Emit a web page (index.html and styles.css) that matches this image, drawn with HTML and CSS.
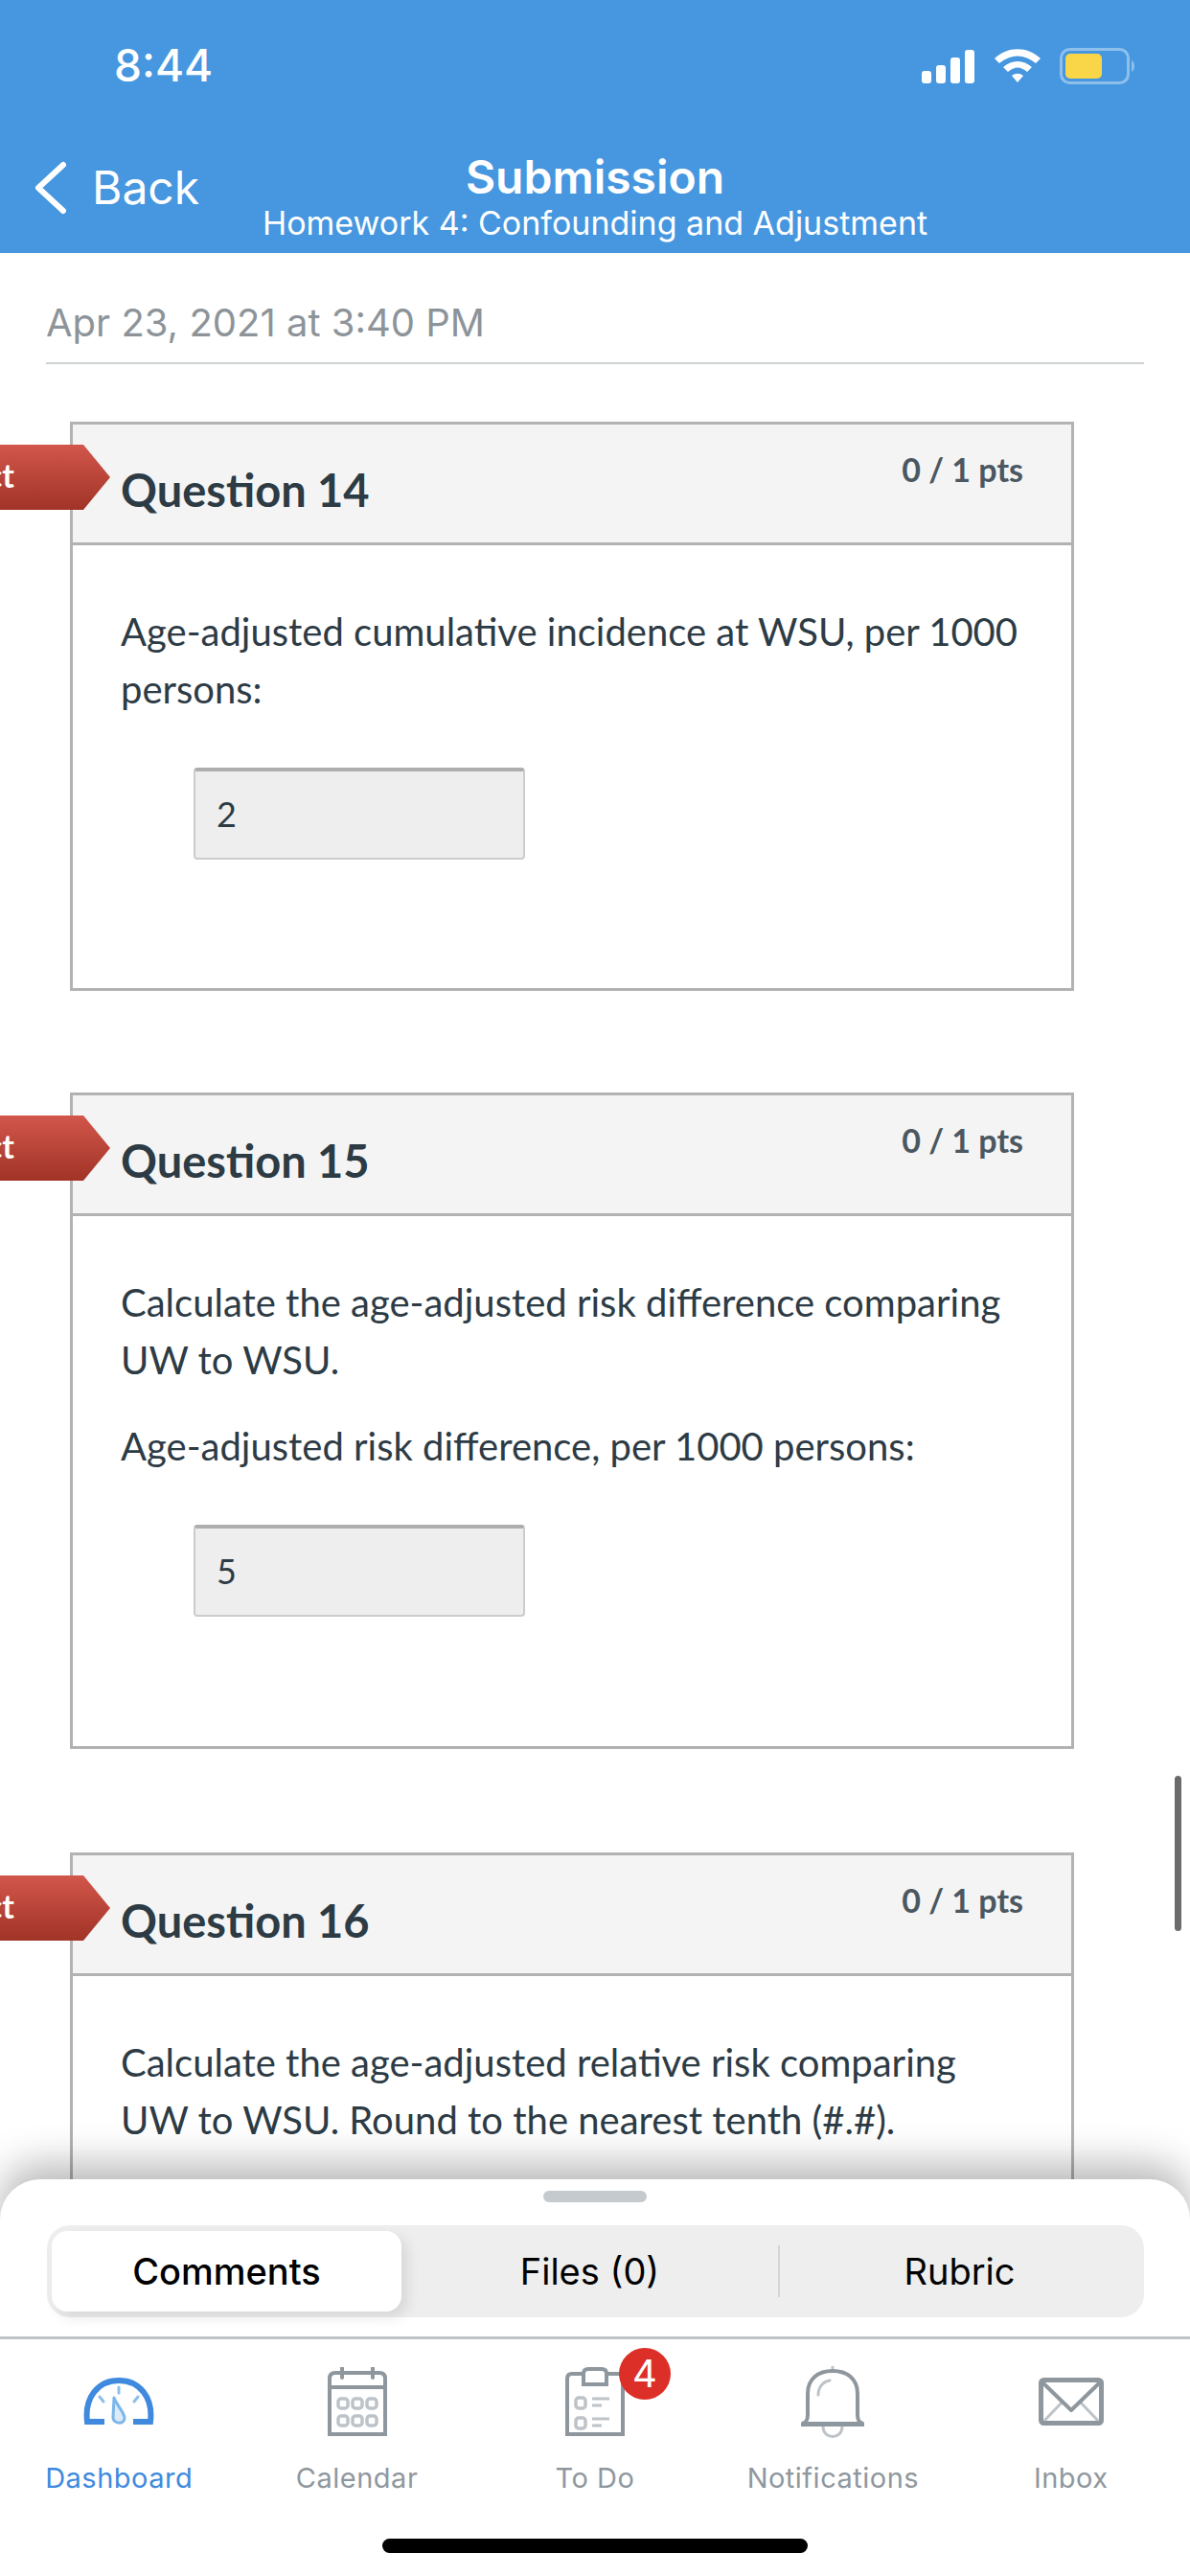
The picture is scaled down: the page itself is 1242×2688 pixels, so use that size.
FILE: index.html
```html
<!DOCTYPE html>
<html lang="en">
<head>
    <meta charset="UTF-8">
    <meta name="viewport" content="width=device-width, initial-scale=1.0">
    <title>Submission</title>
    <link rel="stylesheet" href="styles.css">
</head>
<body>
    <div class="screen">
        <header class="app-header">
            <div class="status-bar">
                <span class="clock">8:44</span>
                <div class="status-icons">
                    <svg class="icon-signal" width="56" height="35" viewBox="0 0 56 35">
                        <rect x="0" y="22" width="10" height="13" rx="3"/>
                        <rect x="15" y="16" width="10" height="19" rx="3"/>
                        <rect x="30" y="8" width="10" height="27" rx="3"/>
                        <rect x="45" y="0" width="10" height="35" rx="3"/>
                    </svg>
                    <svg class="icon-wifi" width="48" height="36" viewBox="0 0 48 36">
                        <path d="M0 10 C14 -3 34 -3 48 10 L43 15 C31 5 17 5 5 15 Z"/>
                        <path d="M9 19 C18 11 30 11 39 19 L34 24 C27 18 21 18 14 24 Z"/>
                        <path d="M18 28 C22 25 26 25 30 28 L24 35 Z"/>
                    </svg>
                    <svg class="icon-battery" width="80" height="38" viewBox="0 0 80 38">
                        <rect x="1.5" y="1.5" width="70" height="35" rx="9" fill="none" stroke="#8fc0ec" stroke-width="3"/>
                        <rect x="6" y="6" width="38" height="26" rx="5" fill="#f9d648"/>
                        <path d="M75 13 C79 15 79 23 75 25 Z" fill="#8fc0ec"/>
                    </svg>
                </div>
            </div>
            <div class="nav-bar">
                <div class="nav-back">
                    <svg width="36" height="56" viewBox="0 0 36 56">
                        <path d="M32 4 L6 28 L32 52" fill="none" stroke="#fff" stroke-width="6" stroke-linecap="round" stroke-linejoin="round" transform="translate(-2 0)"/>
                    </svg>
                    <span>Back</span>
                </div>
                <div class="nav-title">
                    <div class="nav-title-main">Submission</div>
                    <div class="nav-title-sub">Homework 4: Confounding and Adjustment</div>
                </div>
            </div>
        </header>

        <main class="content">
            <div class="submitted-at">Apr 23, 2021 at 3:40 PM</div>

            <section class="question q14">
                <div class="answer-flag"><span>Incorrect</span></div>
                <div class="question-head">
                    <h3>Question 14</h3>
                    <span class="points">0 / 1 pts</span>
                </div>
                <div class="question-body">
                    <p>Age-adjusted cumulative incidence at WSU, per 1000 persons:</p>
                    <div class="answer-box">2</div>
                </div>
            </section>

            <section class="question q15">
                <div class="answer-flag"><span>Incorrect</span></div>
                <div class="question-head">
                    <h3>Question 15</h3>
                    <span class="points">0 / 1 pts</span>
                </div>
                <div class="question-body">
                    <p>Calculate the age-adjusted risk difference comparing UW to WSU.</p>
                    <p>Age-adjusted risk difference, per 1000 persons:</p>
                    <div class="answer-box">5</div>
                </div>
            </section>

            <section class="question q16">
                <div class="answer-flag"><span>Incorrect</span></div>
                <div class="question-head">
                    <h3>Question 16</h3>
                    <span class="points">0 / 1 pts</span>
                </div>
                <div class="question-body">
                    <p>Calculate the age-adjusted relative risk comparing UW to WSU. Round to the nearest tenth (#.#).</p>
                </div>
            </section>
        </main>

        <div class="scroll-thumb"></div>

        <div class="bottom-sheet">
            <div class="sheet-handle"></div>
            <div class="tabs">
                <div class="tab tab-active">Comments</div>
                <div class="tab tab-files">Files (0)</div>
                <div class="tab-divider"></div>
                <div class="tab tab-rubric">Rubric</div>
            </div>
            <nav class="tab-bar">
                <div class="tab-item tab-item-active">
                    <div class="tab-icon">
                        <svg width="74" height="52" viewBox="0 0 74 52" fill="none">
                            <path d="M22 47 H4 C1 22 15 4 37 4 C59 4 73 22 70 47 H52" stroke="#3f8ade" stroke-width="6"/>
                            <path d="M37 11 V17 M17 21 L21 26 M57 21 L53 26" stroke="#8cc0ec" stroke-width="3" stroke-linecap="round"/>
                            <path d="M32 26 C34 32 43 42 43 47 C43 55 30 53 31 46 Z" transform="translate(0 -4)" fill="#dcebf9" stroke="#7db6ea" stroke-width="3" stroke-linejoin="round"/>
                        </svg>
                    </div>
                    <span>Dashboard</span>
                </div>
                <div class="tab-item">
                    <div class="tab-icon">
                        <svg width="62" height="72" viewBox="0 0 62 72" fill="none">
                            <path d="M2 70 V12 Q2 6 8 6 H54 Q60 6 60 12 V70 Z" stroke="#8f979e" stroke-width="4"/>
                            <path d="M2 21 H60" stroke="#8f979e" stroke-width="4"/>
                            <path d="M15 1 V11 M47 1 V11" stroke="#8f979e" stroke-width="4" stroke-linecap="round"/>
                            <g stroke="#bdc3c8" stroke-width="3.5">
                                <rect x="11" y="33" width="10" height="10" rx="3"/>
                                <rect x="26" y="33" width="10" height="10" rx="3"/>
                                <rect x="41" y="33" width="10" height="10" rx="3"/>
                                <rect x="11" y="51" width="10" height="10" rx="3"/>
                                <rect x="26" y="51" width="10" height="10" rx="3"/>
                                <rect x="41" y="51" width="10" height="10" rx="3"/>
                            </g>
                        </svg>
                    </div>
                    <span>Calendar</span>
                </div>
                <div class="tab-item">
                    <div class="tab-icon">
                        <svg width="62" height="72" viewBox="0 0 62 72" fill="none">
                            <path d="M2 70 V12 Q2 7 7 7 H55 Q60 7 60 12 V70 Z" stroke="#8f979e" stroke-width="4"/>
                            <path d="M19 18 V7 Q19 2 24 2 H38 Q43 2 43 7 V18 Z" fill="#fff" stroke="#8f979e" stroke-width="4"/>
                            <rect x="11" y="32" width="10" height="11" rx="3" stroke="#bdc3c8" stroke-width="3.5"/>
                            <rect x="11" y="53" width="10" height="11" rx="3" stroke="#bdc3c8" stroke-width="3.5"/>
                            <path d="M28 33 H46 M28 40 H38 M28 54 H46 M28 61 H38" stroke="#bdc3c8" stroke-width="3"/>
                        </svg>
                        <span class="badge">4</span>
                    </div>
                    <span>To Do</span>
                </div>
                <div class="tab-item">
                    <div class="tab-icon">
                        <svg width="68" height="76" viewBox="0 0 68 76" fill="none">
                            <path d="M34 1 V6" stroke="#bdc3c8" stroke-width="3"/>
                            <path d="M8 52 V30 C8 14 19 6 34 6 C49 6 60 14 60 30 V52 C60 58 62 60 66 61 H2 C6 60 8 58 8 52 Z" stroke="#8f979e" stroke-width="4"/>
                            <path d="M1 62 H67" stroke="#8f979e" stroke-width="4"/>
                            <path d="M19 31 C19 23 24 17 31 16" stroke="#bdc3c8" stroke-width="3" stroke-linecap="round"/>
                            <path d="M24 64 C24 78 44 78 44 64" stroke="#bdc3c8" stroke-width="3"/>
                        </svg>
                    </div>
                    <span>Notifications</span>
                </div>
                <div class="tab-item">
                    <div class="tab-icon">
                        <svg width="68" height="50" viewBox="0 0 68 50" fill="none">
                            <path d="M6 45 L25 25 M62 45 L43 25" stroke="#bdc3c8" stroke-width="3"/>
                            <rect x="2.5" y="2.5" width="63" height="45" rx="3" stroke="#8f979e" stroke-width="5"/>
                            <path d="M4 5 L34 34 L64 5" stroke="#8f979e" stroke-width="4" stroke-linejoin="round"/>
                        </svg>
                    </div>
                    <span>Inbox</span>
                </div>
            </nav>
            <div class="home-bar"></div>
        </div>
    </div>
</body>
</html>
```

FILE: styles.css
```css
* {
    box-sizing: border-box;
}
html, body {
    margin: 0;
    padding: 0;
    background-color: white;
}
.screen {
    position: relative;
    width: 1242px;
    height: 2688px;
    overflow: hidden;
    font-family: Inter, "Liberation Sans", sans-serif;
}

/* header */
.app-header {
    height: 264px;
    background-color: #4697df;
    color: white;
}
.status-bar {
    height: 136px;
    padding: 42px 56px 0 119px;
    display: flex;
    justify-content: space-between;
    align-items: flex-start;
}
.clock {
    font-size: 46px;
    font-weight: 500;
    line-height: 52px;
}
.status-icons {
    display: flex;
    align-items: center;
    gap: 20px;
    padding-top: 8px;
}
.icon-signal, .icon-wifi {
    fill: white;
}
.nav-bar {
    position: relative;
    height: 128px;
    display: flex;
    justify-content: center;
}
.nav-back {
    position: absolute;
    left: 36px;
    top: 30px;
    display: flex;
    align-items: center;
    gap: 24px;
    font-size: 48px;
}
.nav-title {
    text-align: center;
    margin-left: 0;
}
.nav-title-main {
    font-size: 48px;
    font-weight: 600;
    line-height: 58px;
    margin-top: 20px;
}
.nav-title-sub {
    font-size: 34px;
    line-height: 38px;
}

/* question list */
.content {
    padding: 0 48px 0 73px;
}
.submitted-at {
    margin-left: -25px;
    height: 116px;
    padding-top: 48px;
    border-bottom: 2px solid #cfd2d4;
    font-size: 40px;
    line-height: 50px;
    color: #8d9499;
}
.question {
    position: relative;
    width: 1048px;
    border: 3px solid #b2b2b2;
    font-family: Lato, "Liberation Sans", sans-serif;
    color: #2d3b45;
}
.q14 {
    margin-top: 60px;
    height: 594px;
}
.q15 {
    margin-top: 106px;
    height: 685px;
}
.q16 {
    margin-top: 108px;
    height: 500px;
}
.question-head {
    height: 126px;
    display: flex;
    justify-content: space-between;
    padding: 0 50px;
    background-color: #f4f4f4;
    border-bottom: 3px solid #b2b2b2;
}
.question-head h3 {
    margin: 0;
    font-size: 47px;
    font-weight: 700;
    line-height: 48px;
    padding-top: 44px;
}
.points {
    font-size: 34px;
    font-weight: 700;
    color: #4b5761;
    padding-top: 26px;
}
.question-body {
    padding: 60px 50px 0;
}
.question-body p {
    margin: 0 0 30px;
    font-size: 40px;
    line-height: 60px;
}
.answer-box {
    width: 346px;
    height: 96px;
    margin: 52px 0 0 76px;
    padding-left: 22px;
    background-color: #eeeeee;
    border: 2px solid #cccccc;
    border-top: 4px solid #aeaeae;
    border-radius: 4px;
    font-size: 36px;
    line-height: 88px;
}
.answer-flag {
    position: absolute;
    left: -76px;
    top: 21px;
    width: 115px;
    height: 68px;
    padding-right: 29px;
    overflow: hidden;
    clip-path: polygon(0 0, 87px 0, 115px 50%, 87px 100%, 0 100%);
    background: linear-gradient(#d2564b, #a13327);
    color: white;
    font-size: 34px;
    font-weight: 700;
    line-height: 64px;
    text-align: right;
    white-space: nowrap;
    display: flex;
    justify-content: flex-end;
}
.answer-flag span {
    margin-right: 71px;
}

.scroll-thumb {
    position: absolute;
    left: 1226px;
    top: 1853px;
    width: 7px;
    height: 162px;
    border-radius: 4px;
    background-color: #6b6b6b;
}

/* bottom sheet */
.bottom-sheet {
    position: absolute;
    left: 0;
    right: 0;
    top: 2274px;
    bottom: 0;
    background-color: white;
    border-radius: 42px 42px 0 0;
    box-shadow: 0 -16px 40px rgba(0,0,0,0.28);
}
.sheet-handle {
    width: 108px;
    height: 12px;
    margin: 12px auto 0;
    border-radius: 6px;
    background-color: #c5cace;
}
.tabs {
    position: relative;
    display: flex;
    align-items: center;
    width: 1145px;
    height: 96px;
    margin: 24px 0 0 49px;
    padding: 6px 5px;
    background-color: #eeeeee;
    border-radius: 24px;
    font-size: 38px;
    font-weight: 500;
    color: black;
}
.tab {
    text-align: center;
}
.tab-active {
    width: 365px;
    height: 84px;
    line-height: 84px;
    background-color: white;
    border-radius: 16px;
    box-shadow: 6px 6px 14px rgba(0,0,0,0.1);
}
.tab-files {
    width: 393px;
    font-weight: 400;
}
.tab-divider {
    width: 2px;
    height: 54px;
    background-color: #d4d4d4;
}
.tab-rubric {
    flex: 1;
    font-weight: 400;
}

/* tab bar */
.tab-bar {
    display: flex;
    height: 180px;
    margin-top: 20px;
    border-top: 3px solid #bfc2c4;
}
.tab-item {
    width: 248.4px;
    display: flex;
    flex-direction: column;
    align-items: center;
    font-size: 29px;
    letter-spacing: 0.5px;
    color: #8f979e;
}
.tab-item-active {
    color: #3f8ade;
}
.tab-icon {
    position: relative;
    height: 92px;
    margin-top: 19px;
    margin-bottom: 16px;
    display: flex;
    align-items: center;
    justify-content: center;
}
.badge {
    position: absolute;
    left: 56px;
    top: -10px;
    width: 54px;
    height: 54px;
    border-radius: 50%;
    background-color: #dc2f27;
    color: white;
    font-size: 40px;
    letter-spacing: 0;
    line-height: 54px;
    text-align: center;
}
.home-bar {
    width: 444px;
    height: 15px;
    margin: 31px auto 0;
    border-radius: 8px;
    background-color: black;
}
```
